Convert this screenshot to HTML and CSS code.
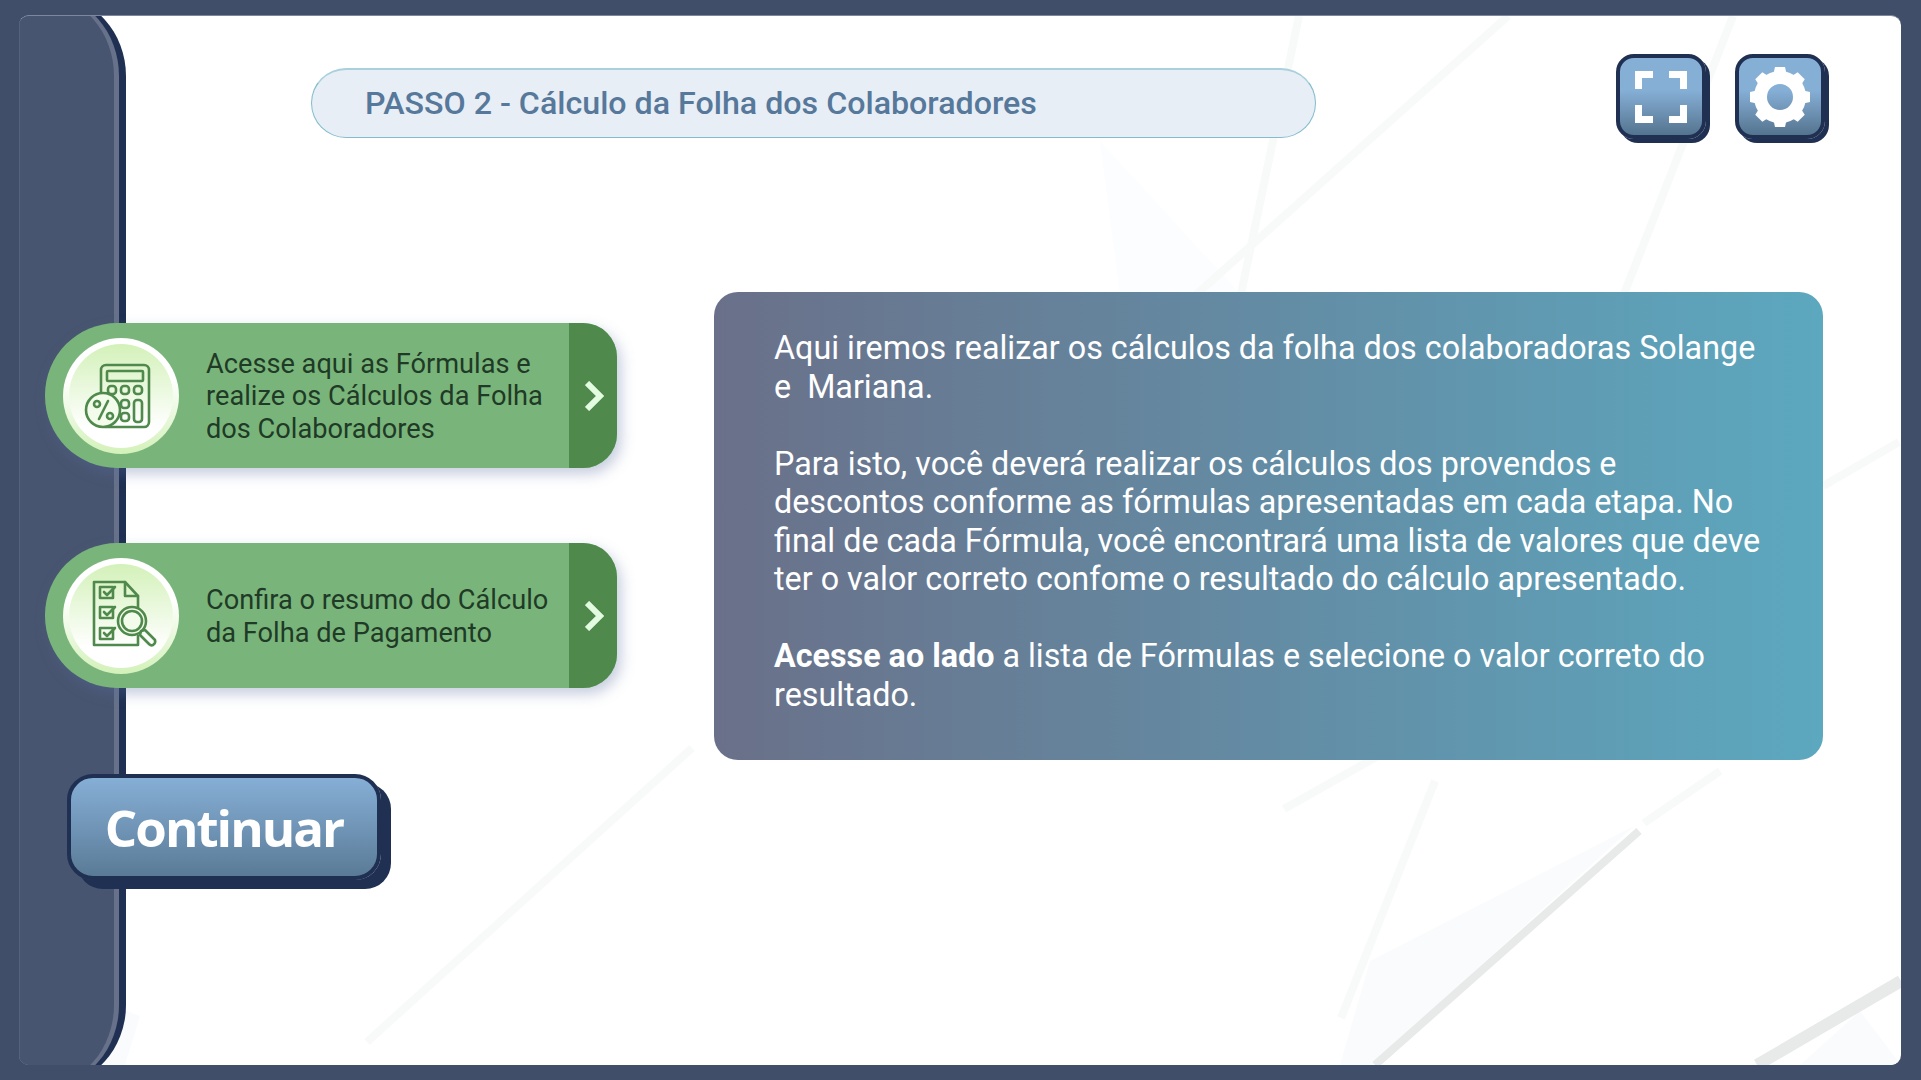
FILE: index.html
```html
<!DOCTYPE html>
<html lang="pt-BR">
    <head>
        <link rel="stylesheet" href="styles.css">
        <title>Passo 2</title>
        <meta charset="UTF-8">
    </head>
    <body>
        <div class="panel">
            <svg class="panel-lines" width="1882" height="1050" viewBox="19 15 1882 1050">
                <polygon class="tint" points="1370,960 1634,825 1372,1064 1340,1064"></polygon>
                <polygon class="faint" points="1100,140 1240,293 1120,293"></polygon>
                <polygon class="tint" points="1800,1064 1860,1010 1901,1064"></polygon>
                <polygon class="tint" points="101,1000 140,1015 125,1064 101,1064"></polygon>
                <line class="pale" x1="1508" y1="15" x2="1189" y2="300"></line>
                <line class="pale" x1="1299" y1="15" x2="1241" y2="293"></line>
                <line class="pale" x1="1733" y1="15" x2="1624" y2="293"></line>
                <line class="pale" x1="692" y1="747" x2="367" y2="1041"></line>
                <line class="pale" x1="1284" y1="808" x2="1440" y2="720"></line>
                <line class="pale" x1="1899" y1="441" x2="1823" y2="485"></line>
                <line class="pale" x1="1341" y1="1017" x2="1435" y2="780"></line>
                <line class="pale" x1="1720" y1="770" x2="1644" y2="822"></line>
                <line class="grey" x1="1639" y1="830" x2="1375" y2="1064"></line>
                <line class="grey wide" x1="1901" y1="980" x2="1757" y2="1064"></line>
            </svg>
            <div class="sidebar"></div>

            <div class="header">
                <div class="step-title">PASSO 2 - Cálculo da Folha dos Colaboradores</div>
                <div class="tools">
                    <button class="tool-btn">
                        <svg width="52" height="52" viewBox="0 0 52 52">
                            <path class="fs" d="M0 0H18V7H7V18H0ZM52 0V18H45V7H34V0ZM0 52V34H7V45H18V52ZM52 52H34V45H45V34H52Z"></path>
                        </svg>
                    </button>
                    <button class="tool-btn">
                        <svg width="60" height="60" viewBox="0 0 60 60">
                            <g class="gear">
                                <circle cx="30" cy="30" r="19.5"></circle>
                                <polygon points="23,9 25,0 35,0 37,9"></polygon>
                                <polygon points="23,9 25,0 35,0 37,9" transform="rotate(45 30 30)"></polygon>
                                <polygon points="23,9 25,0 35,0 37,9" transform="rotate(90 30 30)"></polygon>
                                <polygon points="23,9 25,0 35,0 37,9" transform="rotate(135 30 30)"></polygon>
                                <polygon points="23,9 25,0 35,0 37,9" transform="rotate(180 30 30)"></polygon>
                                <polygon points="23,9 25,0 35,0 37,9" transform="rotate(225 30 30)"></polygon>
                                <polygon points="23,9 25,0 35,0 37,9" transform="rotate(270 30 30)"></polygon>
                                <polygon points="23,9 25,0 35,0 37,9" transform="rotate(315 30 30)"></polygon>
                            </g>
                        </svg>
                    </button>
                </div>
            </div>

            <div class="content">
                <div class="left-col">
                    <div class="link-card">
                        <div class="badge">
                            <svg width="116" height="116" viewBox="0 0 116 116">
                                <g class="ico">
                                    <rect x="38" y="27" width="48" height="62" rx="5"></rect>
                                    <rect x="44" y="33" width="36" height="10" rx="1"></rect>
                                    <rect x="45" y="48" width="8" height="8" rx="3"></rect>
                                    <rect x="58" y="48" width="8" height="8" rx="3"></rect>
                                    <rect x="71" y="48" width="8" height="8" rx="3"></rect>
                                    <rect x="58" y="62" width="8" height="8" rx="3"></rect>
                                    <rect x="71" y="62" width="8" height="22" rx="3"></rect>
                                    <rect x="58" y="75" width="8" height="8" rx="3"></rect>
                                    <circle class="ico-fill" cx="40" cy="72" r="17"></circle>
                                    <circle cx="34" cy="66" r="3"></circle>
                                    <circle cx="47" cy="78" r="3"></circle>
                                    <line x1="45" y1="63" x2="36" y2="81"></line>
                                </g>
                            </svg>
                        </div>
                        <div class="link-text">Acesse aqui as Fórmulas e<br>realize os Cálculos da Folha<br>dos Colaboradores</div>
                        <div class="link-arrow">
                            <svg width="20" height="30" viewBox="0 0 20 30"><path class="chev" d="M2 2L15 15L2 28"></path></svg>
                        </div>
                    </div>
                    <div class="link-card">
                        <div class="badge">
                            <svg width="116" height="116" viewBox="0 0 116 116">
                                <g class="ico">
                                    <path d="M75 66V38L62 24H31V87H75V78"></path>
                                    <path d="M62 24V38H75"></path>
                                    <rect x="37" y="29" width="13" height="11"></rect>
                                    <rect x="37" y="49" width="13" height="11"></rect>
                                    <rect x="37" y="70" width="13" height="11"></rect>
                                    <path d="M41 34L44 37L52 29M41 54L44 57L52 49M41 75L44 78L52 70"></path>
                                    <circle class="ico-fill" cx="69" cy="63" r="14"></circle>
                                    <circle cx="69" cy="63" r="10"></circle>
                                    <path d="M78 73L82 72L92 82Q93 85 90 87Q88 88 86 86L77 77Z"></path>
                                </g>
                            </svg>
                        </div>
                        <div class="link-text">Confira o resumo do Cálculo<br>da Folha de Pagamento</div>
                        <div class="link-arrow">
                            <svg width="20" height="30" viewBox="0 0 20 30"><path class="chev" d="M2 2L15 15L2 28"></path></svg>
                        </div>
                    </div>
                    <button class="continue-btn">Continuar</button>
                </div>

                <div class="info-box">
                    <p>Aqui iremos realizar os cálculos da folha dos colaboradoras Solange<br>e&nbsp; Mariana.</p>
                    <p>Para isto, você deverá realizar os cálculos dos provendos e<br>descontos conforme as fórmulas apresentadas em cada etapa. No<br>final de cada Fórmula, você encontrará uma lista de valores que deve<br>ter o valor correto confome o resultado do cálculo apresentado.</p>
                    <p><strong>Acesse ao lado</strong> a lista de Fórmulas e selecione o valor correto do<br>resultado.</p>
                </div>
            </div>
        </div>
    </body>
</html>
```

FILE: styles.css
```css
html, body {
    margin: 0;
    height: 100%;
    overflow: hidden;
}
body {
    background-color: #414e69;
    font-family: Roboto, "Liberation Sans", sans-serif;
    padding: 15px 20px 15px 19px;
    box-sizing: border-box;
}
button {
    font-family: inherit;
    cursor: pointer;
}

.panel {
    position: relative;
    height: 1050px;
    background-color: #ffffff;
    border-radius: 10px;
    border-top: 1px solid #7d879b;
    box-sizing: border-box;
    overflow: hidden;
}
.panel-lines {
    position: absolute;
    left: 0;
    top: 0;
}
.panel-lines .tint {
    fill: #fafbfd;
}
.panel-lines .faint {
    fill: #fcfdfe;
}
.panel-lines .pale {
    stroke: #f8f9f9;
    stroke-width: 8;
}
.panel-lines .grey {
    stroke: #e8e9e9;
    stroke-width: 8;
}
.panel-lines .wide {
    stroke-width: 12;
}

/* three stacked shapes make the curved edge, cut off by the panel */
.sidebar {
    position: absolute;
    left: 0;
    top: -20px;
    bottom: -20px;
    width: 107px;
    background-color: #1f3052;
    border-radius: 0 73px 73px 0 / 0 80px 80px 0;
}
.sidebar::before {
    content: "";
    position: absolute;
    left: 0;
    top: 0;
    bottom: 0;
    width: 100px;
    background-color: #67728a;
    border-radius: 0 70px 70px 0 / 0 80px 80px 0;
}
.sidebar::after {
    content: "";
    position: absolute;
    left: 0;
    top: 0;
    bottom: 0;
    width: 95px;
    box-sizing: border-box;
    background-color: #485570;
    border-left: 1px solid #56627b;
    border-radius: 0 70px 70px 0 / 0 80px 80px 0;
}

.header {
    position: relative;
    display: flex;
    align-items: flex-start;
    padding: 38px 76px 0 292px;
}
.step-title {
    width: 1005px;
    height: 70px;
    margin-top: 14px;
    box-sizing: border-box;
    padding-left: 53px;
    line-height: 66px;
    font-size: 32.2px;
    font-weight: 500;
    color: #56789a;
    background-color: #e8eef5;
    border: 1px solid #84bccd;
    border-top: 2px solid #a9d0dc;
    border-radius: 35px;
}
.tools {
    display: flex;
    gap: 29px;
    margin-left: auto;
}
.tool-btn {
    display: flex;
    align-items: center;
    justify-content: center;
    width: 90px;
    height: 85px;
    padding: 0;
    background: linear-gradient(#86afd6 0%, #86afd6 42%, #54748f 100%);
    border: 4px solid #1f3052;
    border-radius: 18px;
    box-shadow: 4px 4px 0 #1f3052;
}
.fs {
    fill: #ffffff;
}
.gear polygon {
    fill: #ffffff;
}
.gear circle {
    fill: none;
    stroke: #ffffff;
    stroke-width: 13;
}

.content {
    position: relative;
    display: flex;
    padding: 153px 0 0 26px;
}
.left-col {
    width: 669px;
    padding-top: 31px;
}
.link-card {
    display: flex;
    align-items: center;
    width: 572px;
    height: 145px;
    margin-bottom: 75px;
    background-color: #79b57a;
    border-radius: 72px 34px 34px 72px;
    box-shadow: 4px 6px 14px rgba(90, 110, 160, 0.35);
    overflow: hidden;
}
.badge {
    flex: none;
    width: 116px;
    height: 116px;
    margin-left: 18px;
    box-sizing: border-box;
    border: 6px solid transparent;
    border-radius: 50%;
    background:
        linear-gradient(#d3f1b9, #ffffff 80%) padding-box,
        linear-gradient(#ffffff 35%, #d3f1b9) border-box;
}
.badge svg {
    display: block;
    margin: -6px;
}
.ico > * {
    fill: none;
    stroke: #4f8a4c;
    stroke-width: 2.6;
    stroke-linejoin: round;
    stroke-linecap: round;
}
.ico .ico-fill {
    fill: #f3fbea;
}
.link-text {
    flex: 1;
    padding: 2px 0 0 27px;
    font-size: 27.2px;
    line-height: 32.6px;
    color: #1f3a26;
}
.link-arrow {
    flex: none;
    display: flex;
    align-items: center;
    justify-content: center;
    align-self: stretch;
    width: 48px;
    padding-left: 4px;
    box-sizing: border-box;
    background-color: #4f8a4c;
}
.chev {
    fill: none;
    stroke: #e3fbe0;
    stroke-width: 6;
}
.continue-btn {
    display: block;
    width: 314px;
    height: 106px;
    margin: 86px 0 0 22px;
    padding: 0;
    font-family: "Open Sans", sans-serif;
    font-size: 51px;
    font-weight: 700;
    letter-spacing: -2px;
    color: #ffffff;
    background: linear-gradient(#86afd6, #5a7b97);
    border: 4px solid #1f3052;
    border-radius: 26px;
    box-shadow: 10px 9px 0 #1f3052;
}

.info-box {
    width: 1109px;
    height: 468px;
    box-sizing: border-box;
    padding: 37px 60px 0;
    border-radius: 24px;
    background: linear-gradient(90deg, #6a7089, #5ca8bf);
    color: #ffffff;
    font-size: 32.3px;
    line-height: 38.5px;
}
.info-box p {
    margin: 0 0 38.5px;
}
```
